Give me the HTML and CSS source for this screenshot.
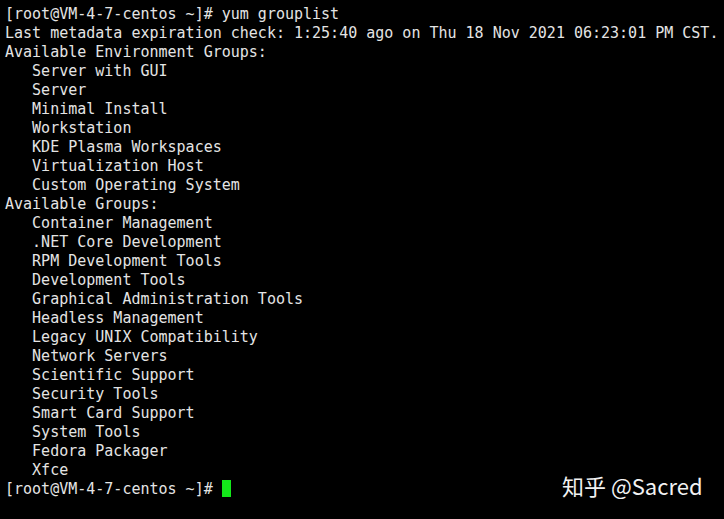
FILE: index.html
```html
<!DOCTYPE html>
<html>
<head>
<meta charset="utf-8">
<link rel="stylesheet" href="styles.css">
</head>
<body>
<div class="term">
  <div class="out">
    <div class="ln">[root@VM-4-7-centos ~]# yum grouplist</div>
    <div class="ln">Last metadata expiration check: 1:25:40 ago on Thu 18 Nov 2021 06:23:01 PM CST.</div>
    <div class="ln">Available Environment Groups:</div>
    <div class="ln">   Server with GUI</div>
    <div class="ln">   Server</div>
    <div class="ln">   Minimal Install</div>
    <div class="ln">   Workstation</div>
    <div class="ln">   KDE Plasma Workspaces</div>
    <div class="ln">   Virtualization Host</div>
    <div class="ln">   Custom Operating System</div>
    <div class="ln">Available Groups:</div>
    <div class="ln">   Container Management</div>
    <div class="ln">   .NET Core Development</div>
    <div class="ln">   RPM Development Tools</div>
    <div class="ln">   Development Tools</div>
    <div class="ln">   Graphical Administration Tools</div>
    <div class="ln">   Headless Management</div>
    <div class="ln">   Legacy UNIX Compatibility</div>
    <div class="ln">   Network Servers</div>
    <div class="ln">   Scientific Support</div>
    <div class="ln">   Security Tools</div>
    <div class="ln">   Smart Card Support</div>
    <div class="ln">   System Tools</div>
    <div class="ln">   Fedora Packager</div>
    <div class="ln">   Xfce</div>
    <div class="ln">[root@VM-4-7-centos ~]# <span class="cursor"></span></div>
  </div>
  <div class="mark">知乎 @Sacred</div>
</div>
</body>
</html>
```

FILE: styles.css
```css
html, body {
  margin: 0;
  padding: 0;
  background: #000;
}
.term {
  position: relative;
  width: 724px;
  height: 519px;
  background: #000;
  overflow: hidden;
}
.out {
  padding: 5px 0 0 5px;
  font-family: "DejaVu Sans Mono", monospace;
  font-size: 15px;
  line-height: 19px;
  color: #e4e4e4;
}
.ln {
  white-space: pre;
  width: fit-content;
  height: 19px;
}
.cursor {
  display: inline-block;
  width: 9px;
  height: 17px;
  vertical-align: top;
  background: #14e81a;
}
.mark {
  position: absolute;
  left: 562px;
  top: 470px;
  font-family: "Noto Sans CJK SC", "Noto Sans", sans-serif;
  font-size: 22px;
  line-height: 30px;
  color: #f2f2f2;
  white-space: nowrap;
}
```
